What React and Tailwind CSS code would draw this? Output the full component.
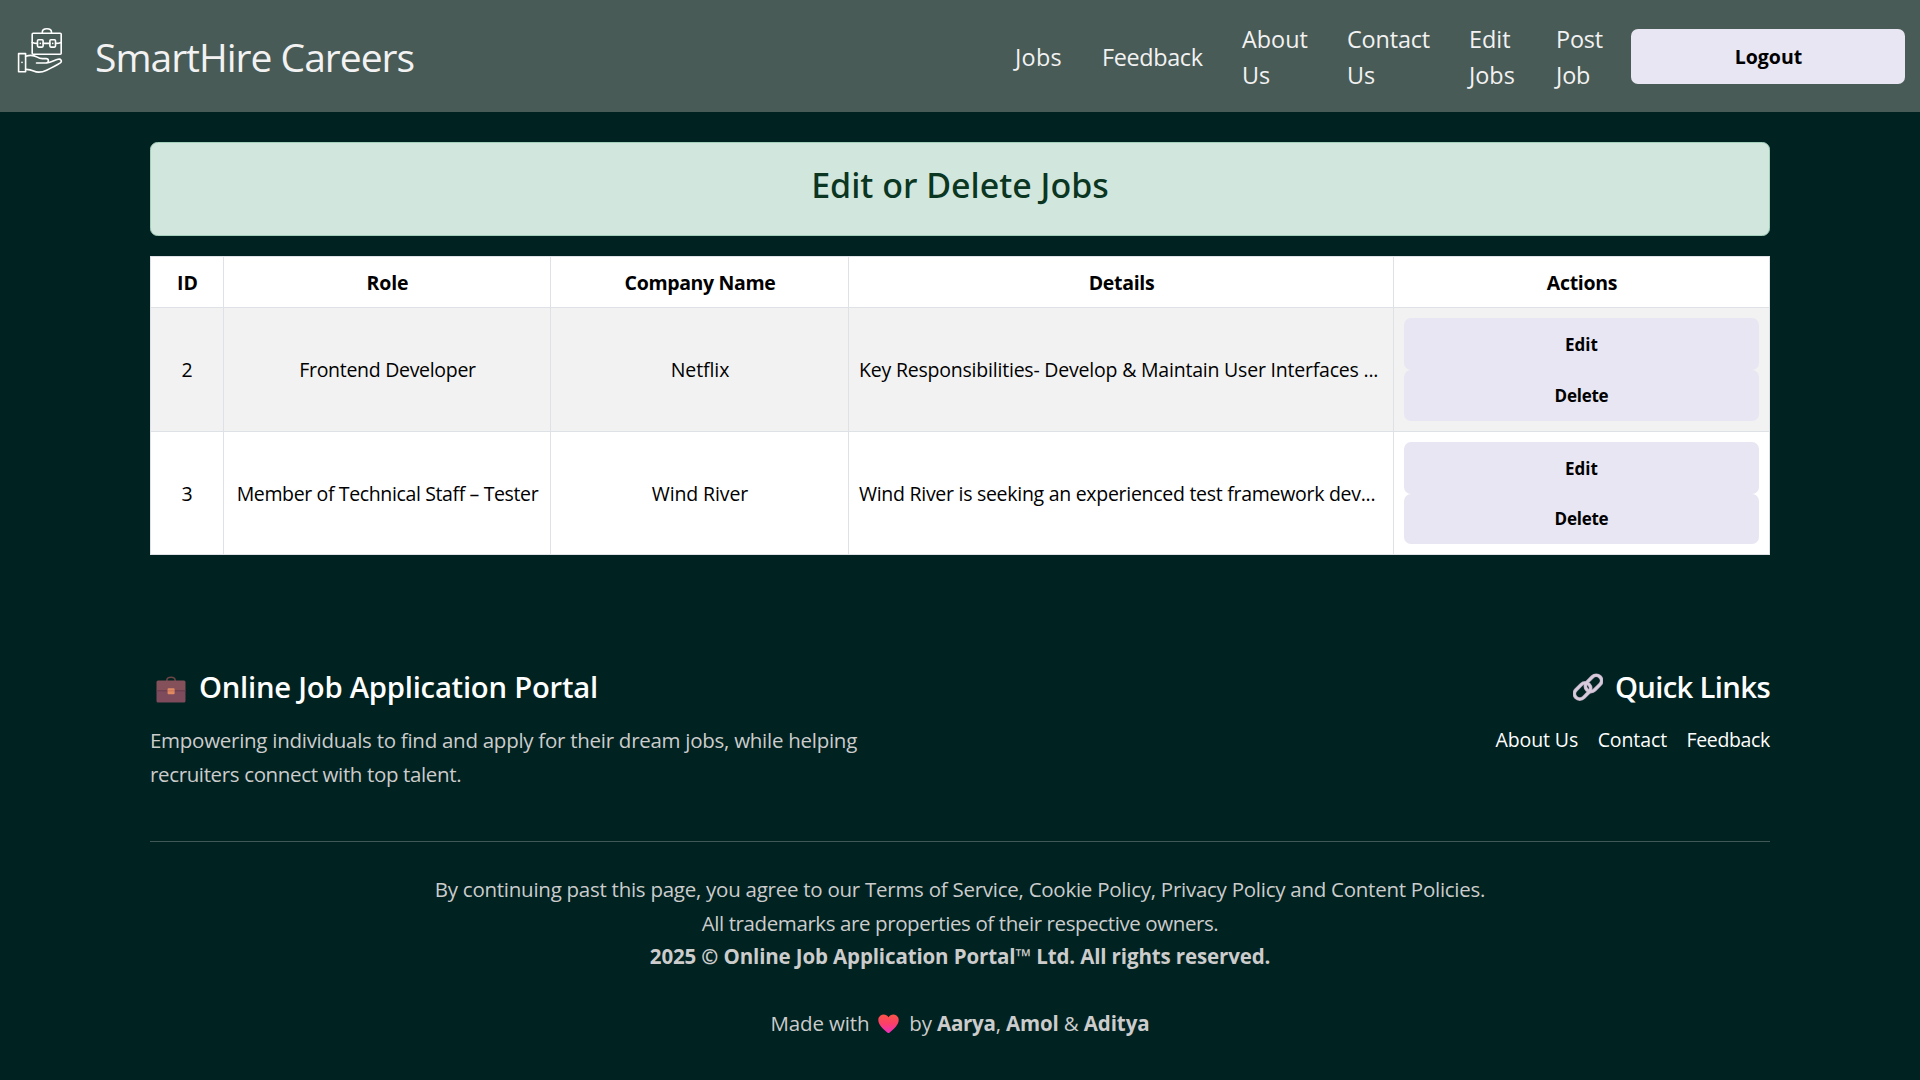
const SANS = "font-['Open_Sans','Noto_Sans',sans-serif]";

const navItems = [
  { lines: ["Jobs"], cls: "tracking-[0.3px]" },
  { lines: ["Feedback"], cls: "tracking-[-0.35px]" },
  { lines: ["About", "Us"], cls: "" },
  { lines: ["Contact", "Us"], cls: "tracking-[-0.15px]" },
  { lines: ["Edit", "Jobs"], cls: "" },
  { lines: ["Post", "Job"], cls: "tracking-[-0.15px]" },
];

const columns = [
  { label: "ID", cls: "" },
  { label: "Role", cls: "tracking-[-0.1px]" },
  { label: "Company Name", cls: "tracking-[-0.35px]" },
  { label: "Details", cls: "tracking-[-0.3px]" },
  { label: "Actions", cls: "tracking-[-0.3px]" },
];

const jobs = [
  {
    id: 2,
    role: "Frontend Developer",
    company: "Netflix",
    details: "Key Responsibilities- Develop & Maintain User Interfaces ...",
    row: "h-[124px] bg-[#f2f2f2]",
    pad: "",
    roleCls: "tracking-[-0.3px]",
    detailsCls: "tracking-[-0.21px]",
  },
  {
    id: 3,
    role: "Member of Technical Staff – Tester",
    company: "Wind River",
    details: "Wind River is seeking an experienced test framework dev...",
    row: "h-[123px] bg-white",
    pad: "pt-[2px]",
    roleCls: "tracking-[-0.37px]",
    detailsCls: "tracking-[-0.28px]",
  },
];

const GRID = "grid grid-cols-[73px_327px_298px_545px_376px]";
const CELL = "flex items-center justify-center border-r border-b border-[#dee2e6]";

function Logo() {
  return (
    <svg className="h-[48px] w-[48px]" viewBox="0 0 48 48" fill="none" stroke="#ffffff" strokeWidth="1.6" strokeLinejoin="round" strokeLinecap="round">
      <rect x="16.2" y="7.2" width="29" height="21" rx="1" />
      <path d="M26.3 7V6.2c0-2 1.8-3.4 4.6-3.4s4.6 1.4 4.6 3.4V7" />
      <path d="M16.2 16.4c1.7.7 3.3 1 5.1 1M27.3 17.4h6.4M39.7 17.4c2 0 3.8-.3 5.5-1" />
      <rect x="21.5" y="13.7" width="5.6" height="7.4" rx="1" />
      <rect x="33.9" y="13.7" width="5.6" height="7.4" rx="1" />
      <path d="M24.3 17.4h.01M36.7 17.4h.01" />
      <path d="M2.6 27.6h7v18.2h-7z" />
      <path d="M6 36.4h.01" />
      <path d="M9.6 30.3c4.2-1.5 7.8-1.4 11.7.8 1.7 1.1 3.2 1.5 5 1.5h3.7c3.2 0 3.2 4.4 0 4.4H20.5M30.8 37c4.4-.6 7.6-2.7 11.3-3.7 2.8-.7 4.3 1.9 2.2 3.6-4.600 3-9 5.100-13.700 7.300-4.200 2-8.800 2.800-13 .8-2.700-1.300-4.900-1.700-8-1.600" />
    </svg>
  );
}

function Briefcase() {
  return (
    <svg className="h-[27px] w-[30px]" viewBox="0 0 30 27">
      <path d="M10.9 5V4.1c0-1.700 1.400-2.800 4.100-2.800s4.100 1.100 4.100 2.800V5" fill="none" stroke="#6b4644" strokeWidth="1.5" />
      <path d="M2 4.500h26a1.500 1.500 0 0 1 1.500 1.500v9H.5V6A1.500 1.500 0 0 1 2 4.500z" fill="#845059" />
      <path d="M.5 15h29v10a1.500 1.500 0 0 1-1.500 1.500H2A1.500 1.500 0 0 1 .5 25z" fill="#7d4b5c" />
      <path d="M.5 14.800h29" stroke="#673a52" strokeWidth="1" />
      <rect x="11.6" y="12.3" width="7" height="6" rx=".8" fill="#e08a62" />
      <path d="M11.600 14.800h7" stroke="#c26a50" strokeWidth=".8" />
    </svg>
  );
}

function ChainLinks() {
  return (
    <svg className="h-[30px] w-[30px]" viewBox="0 0 30 30" fill="none">
      <g strokeWidth="3.8" stroke="#b9aabd">
        <rect x="11.3" y="6" width="18.4" height="10.8" rx="5.4" transform="rotate(-45 20.5 11.4)" />
        <rect x=".3" y="13.6" width="18.4" height="10.8" rx="5.4" transform="rotate(-45 9.5 19)" />
      </g>
      <g strokeWidth="2.4" stroke="#d8cbdd">
        <rect x="11.3" y="6" width="18.4" height="10.8" rx="5.4" transform="rotate(-45 20.5 11.4)" />
        <rect x=".3" y="13.6" width="18.4" height="10.8" rx="5.4" transform="rotate(-45 9.5 19)" />
      </g>
    </svg>
  );
}

function Heart() {
  return (
    <svg className="mr-[10px] ml-[9px] inline-block h-[20px] w-[21px] align-[-3px]" viewBox="0 0 21 20">
      <defs>
        <linearGradient id="heart" x1="0" y1="0" x2="0" y2="1">
          <stop offset="0" stopColor="#fa5548" />
          <stop offset=".5" stopColor="#fb3f68" />
          <stop offset="1" stopColor="#f02ec0" />
        </linearGradient>
      </defs>
      <path d="M10.500 3.200C9.300 1.300 7.700.4 5.700.4 2.600.4.3 2.800.3 6c0 4.700 4.600 8.800 9.300 12.700.6.500 1.200.5 1.800 0 4.700-3.900 9.300-8 9.300-12.700 0-3.200-2.300-5.600-5.400-5.600-2 0-3.600.9-4.800 2.800z" fill="url(#heart)" />
    </svg>
  );
}

function ActionButton({ children, cls }) {
  return (
    <button className={`flex w-full flex-1 items-center justify-center rounded-[7px] bg-[#e8e6f2] text-[17px] font-bold text-black ${cls}`}>
      {children}
    </button>
  );
}

export default function App() {
  return (
    <div className={`min-h-[1080px] w-full bg-[#002221] text-black ${SANS}`}>
      <nav className="flex h-[112px] items-center justify-between bg-[#495b56] pr-[15px] pl-4 text-[#f2f2f2]">
        <div className="flex items-center">
          <div className="-mt-[12px]">
            <Logo />
          </div>
          <span className="mt-[2px] ml-[31px] text-[39px] leading-[60px] tracking-[-1px]">SmartHire Careers</span>
        </div>
        <div className="flex items-center">
          <ul className="grid grid-cols-[87px_140px_105px_122px_87px_75px] items-center pt-[2px] text-[23.4px] leading-9">
            {navItems.map((item) => (
              <li key={item.lines.join(" ")} className={item.cls}>
                {item.lines.map((line) => (
                  <span key={line} className="block">{line}</span>
                ))}
              </li>
            ))}
          </ul>
          <button className="mt-px h-[55px] w-[274px] rounded-[7px] bg-[#e8e6f2] pl-px text-[19.5px] leading-[30px] font-bold text-black">
            Logout
          </button>
        </div>
      </nav>

      <main className="mx-auto w-[1620px] pt-[30px]">
        <div className="h-[94px] rounded-[7.5px] border border-[#a3cfbb] bg-[#d1e7dd] pt-[21px] text-center">
          <h1 className="font-['Noto_Sans','Open_Sans',sans-serif] text-[34px] leading-[43px] font-medium text-[#0a3622]">
            Edit or Delete Jobs
          </h1>
        </div>

        <div className="mt-5 border-t border-l border-[#dee2e6] text-[19.5px] leading-[30px]">
          <div className={`${GRID} h-[51px] bg-white font-bold`}>
            {columns.map((col) => (
              <div key={col.label} className={`${CELL} pt-px pl-px ${col.cls}`}>{col.label}</div>
            ))}
          </div>
          {jobs.map((job) => (
            <div key={job.id} className={`${GRID} ${job.row}`}>
              <div className={`${CELL} ${job.pad}`}>{job.id}</div>
              <div className={`${CELL} ${job.pad} pl-px ${job.roleCls}`}>{job.role}</div>
              <div className={`${CELL} ${job.pad} pl-px tracking-[-0.1px]`}>{job.company}</div>
              <div className={`${CELL} ${job.pad} justify-start! pl-[10px] whitespace-nowrap ${job.detailsCls}`}>{job.details}</div>
              <div className={`${CELL} flex-col p-[10px]`}>
                <ActionButton cls="pt-[2px]">Edit</ActionButton>
                <ActionButton cls="pt-px tracking-[-0.25px]">Delete</ActionButton>
              </div>
            </div>
          ))}
        </div>
      </main>

      <footer className="mx-auto w-[1620px] pt-[114px] text-[20.5px] leading-[33.6px] text-[#cccccc]">
        <div className="flex h-[172px] justify-between">
          <div>
            <h2 className="flex h-9 items-center text-[29.25px] leading-9 font-semibold tracking-[-0.24px] text-white">
              <span className="mt-[4px] mr-[13px] ml-[6px]">
                <Briefcase />
              </span>
              Online Job Application Portal
            </h2>
            <p className="mt-[19.4px] whitespace-nowrap">
              <span className="block tracking-[-0.27px]">
                Empowering individuals to find and apply for their dream jobs, while helping
              </span>
              <span className="block tracking-[-0.36px]">recruiters connect with top talent.</span>
            </p>
          </div>
          <div className="flex flex-col items-end">
            <h2 className="flex h-9 items-center text-[29.25px] leading-9 font-semibold tracking-[-0.65px] text-white">
              <span className="mr-[12px]">
                <ChainLinks />
              </span>
              Quick Links
            </h2>
            <div className="mt-[19px] flex gap-[19.5px] text-[19.5px] leading-8 text-white">
              <a className="tracking-[-0.1px]">About Us</a>
              <a className="tracking-[-0.1px]">Contact</a>
              <a className="tracking-[-0.35px]">Feedback</a>
            </div>
          </div>
        </div>
        <hr className="border-t border-[#405856]" />
        <div className="pt-[31px] text-center whitespace-nowrap">
          <p className="tracking-[-0.26px]">
            By continuing past this page, you agree to our Terms of Service, Cookie Policy, Privacy Policy and Content Policies.
          </p>
          <p className="tracking-[-0.4px]">All trademarks are properties of their respective owners.</p>
          <p className="font-bold tracking-[-0.13px]">2025 © Online Job Application Portal™ Ltd. All rights reserved.</p>
          <p className="mt-[33.6px] tracking-[-0.15px]">
            Made with
            <Heart />
            by <b className="tracking-[-0.25px]">Aarya</b>, <b>Amol</b> &amp; <b className="tracking-[-0.1px]">Aditya</b>
          </p>
        </div>
      </footer>
    </div>
  );
}
